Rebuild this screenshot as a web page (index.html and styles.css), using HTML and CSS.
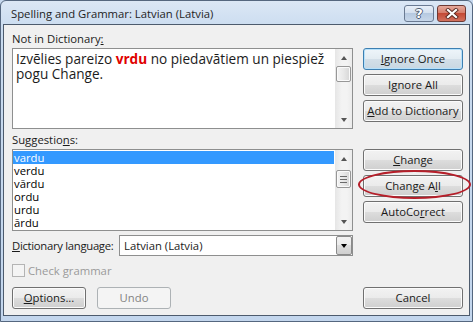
FILE: index.html
```html
<!DOCTYPE html>
<html lang="lv">
<head>
    <meta charset="UTF-8">
    <meta name="viewport" content="width=device-width, initial-scale=1.0">
    <title>Spelling and Grammar</title>
    <link rel="stylesheet" href="styles.css">
</head>
<body>
    <div class="window">
        <div class="titlebar">
            <span class="title">Spelling and Grammar: Latvian (Latvia)</span>
            <div class="caption-buttons">
                <span class="cap help">?</span>
                <span class="cap close">
                    <svg width="14" height="11" viewBox="0 0 14 11">
                        <path d="M3 2 L11 9 M11 2 L3 9" stroke="#5a2a22" stroke-width="4" stroke-linecap="square"/>
                        <path d="M3 2 L11 9 M11 2 L3 9" stroke="#ffffff" stroke-width="2.2" stroke-linecap="square"/>
                    </svg>
                </span>
            </div>
        </div>
        <div class="client">
            <div class="label">Not in Dictionary<u>:</u></div>
            <div class="section">
                <div class="textbox">
                    <div class="textbox-text">Izvēlies pareizo <span class="err">vrdu</span> no piedavātiem un piespiež pogu Change.</div>
                    <div class="scrollbar">
                        <span class="arrow up"></span>
                        <span class="thumb small"></span>
                        <span class="arrow down"></span>
                    </div>
                </div>
                <div class="btn-col">
                    <button class="btn default"><u>I</u>gnore Once</button>
                    <button class="btn">I<u>g</u>nore All</button>
                    <button class="btn"><u>A</u>dd to Dictionary</button>
                </div>
            </div>
            <div class="label">Suggestio<u>n</u>s:</div>
            <div class="section">
                <div class="listbox">
                    <ul class="items">
                        <li class="selected">vardu</li>
                        <li>verdu</li>
                        <li>vārdu</li>
                        <li>ordu</li>
                        <li>urdu</li>
                        <li>ārdu</li>
                    </ul>
                    <div class="scrollbar">
                        <span class="arrow up"></span>
                        <span class="thumb grip"><i></i><i></i><i></i></span>
                        <span class="arrow down"></span>
                    </div>
                </div>
                <div class="btn-col">
                    <button class="btn"><u>C</u>hange</button>
                    <div class="ringed">
                        <button class="btn">Change A<u>l</u>l</button>
                        <span class="ring"></span>
                    </div>
                    <button class="btn">AutoCo<u>r</u>rect</button>
                </div>
            </div>
            <div class="lang-row">
                <span class="lang-label"><u>D</u>ictionary language:</span>
                <div class="combo">
                    <span class="combo-text">Latvian (Latvia)</span>
                    <span class="combo-btn"><span class="arrow down dark"></span></span>
                </div>
            </div>
            <div class="check-row">
                <span class="checkbox"></span>
                <span class="check-text">Check grammar</span>
            </div>
            <div class="bottom-row">
                <button class="btn small-btn"><u>O</u>ptions...</button>
                <button class="btn small-btn" disabled>Undo</button>
                <button class="btn cancel">Cancel</button>
            </div>
        </div>
    </div>
</body>
</html>
```

FILE: styles.css
```css
* {
    box-sizing: border-box;
}
body {
    margin: 0;
    font-family: 'Open Sans', 'Noto Sans', sans-serif;
    font-size: 11.3px;
    color: #1a1a1a;
    background: #c6d8ee;
}
.window {
    width: 473px;
    height: 322px;
    border: 1px solid #55677f;
    border-radius: 6px 6px 0 0;
    background: linear-gradient(#dbe7f5, #c9dbef 30px, #c3d6ed);
    padding: 0 2px 5px 2px;
    display: flex;
    flex-direction: column;
}
.titlebar {
    height: 23px;
    display: flex;
    align-items: flex-start;
    justify-content: space-between;
}
.title {
    margin: 5px 0 0 8px;
    font-size: 11.3px;
    line-height: 15px;
    color: #1e1e1e;
}
.caption-buttons {
    display: flex;
    gap: 3px;
    margin: 4px 4px 0 0;
}
.cap {
    width: 30px;
    height: 17px;
    border: 1px solid #6a7a92;
    border-radius: 3px;
    display: flex;
    align-items: center;
    justify-content: center;
}
.help {
    background: linear-gradient(#e8eff8 0%, #d4e0ef 45%, #b6c9e0 50%, #c7d7ea 100%);
    color: #ffffff;
    font-family: 'DejaVu Sans', sans-serif;
    font-weight: bold;
    font-size: 13px;
    text-shadow: 1px 0 0 #4e5d72, -1px 0 0 #4e5d72, 0 1px 0 #4e5d72, 0 -1px 0 #4e5d72;
}
.close {
    width: 29px;
    border-color: #6e3a34;
    background: linear-gradient(#e5a99c 0%, #d67e6c 45%, #c44a36 50%, #d2715e 100%);
}
.client {
    flex: 1;
    background: #f0f0f0;
    border: 1px solid #4d5b6d;
    padding: 6px 6px 0 8px;
    position: relative;
}
.label {
    line-height: 15px;
    height: 15px;
}
.section {
    display: flex;
    gap: 10px;
    margin: 2px 0 2px 0;
}
.section + .label {
    margin-top: 3px;
}
.textbox, .listbox {
    width: 341px;
    background: #ffffff;
    border: 1px solid #8e8f8f;
    display: flex;
}
.textbox {
    height: 81px;
}
.listbox {
    height: 82px;
}
.textbox-text {
    flex: 1;
    padding: 2px 6px 0 3px;
    font-size: 13.6px;
    line-height: 15px;
    color: #1c1c1c;
}
.err {
    color: #e00000;
    font-weight: bold;
}
.scrollbar {
    width: 17px;
    background: linear-gradient(90deg, #e6e6e6, #f3f3f3 40%, #f3f3f3 70%, #ebebeb);
    display: flex;
    flex-direction: column;
    align-items: center;
}
.arrow {
    width: 0;
    height: 0;
    border-left: 3.5px solid transparent;
    border-right: 3.5px solid transparent;
}
.arrow.up {
    border-bottom: 4px solid #555555;
    margin-top: 7px;
}
.arrow.down {
    border-top: 4px solid #555555;
    margin-top: auto;
    margin-bottom: 6px;
}
.thumb {
    width: 15px;
    border: 1px solid #979797;
    border-radius: 2px;
    background: linear-gradient(90deg, #f4f4f4, #e8e8e8 50%, #d6d6d6);
    box-shadow: inset 0 0 0 1px #fafafa;
}
.thumb.small {
    height: 16px;
    margin-top: 6px;
}
.thumb.grip {
    height: 18px;
    margin-top: 9px;
    display: flex;
    flex-direction: column;
    align-items: center;
    justify-content: center;
    gap: 2px;
}
.thumb.grip i {
    display: block;
    width: 7px;
    height: 1px;
    background: #6b6b6b;
}
.items {
    list-style: none;
    margin: 0;
    padding: 1px 1px 0 0;
    flex: 1;
}
.items li {
    height: 13px;
    line-height: 13px;
    padding-left: 1px;
    color: #000000;
}
.items li.selected {
    background: #3399ff;
    color: #ffffff;
}
.btn-col {
    width: 100px;
    display: flex;
    flex-direction: column;
    gap: 4px;
}
.btn {
    height: 22px;
    width: 100px;
    padding: 0;
    border: 1px solid #707070;
    border-radius: 3px;
    background: linear-gradient(#f2f2f2 0%, #ebebeb 49%, #dddddd 50%, #cfcfcf 100%);
    box-shadow: inset 0 0 0 1px #fbfbfb;
    font-family: inherit;
    font-size: 11.3px;
    color: #1a1a1a;
    line-height: 18px;
}
.btn.default {
    border-color: #3c7fb1;
    box-shadow: inset 0 0 0 1px #b6e1fb;
    background: linear-gradient(#eef5fa 0%, #e3ecf2 49%, #d3dfe8 50%, #c8d7e2 100%);
}
.btn:disabled {
    border-color: #adb2b5;
    background: #f4f4f4;
    box-shadow: none;
    color: #838383;
}
.ringed {
    position: relative;
}
.ring {
    position: absolute;
    left: -5px;
    top: -5px;
    width: 113px;
    height: 29px;
    border: 2px solid #b51f2a;
    border-radius: 50%;
}
.lang-row {
    display: flex;
    align-items: center;
    margin-top: 4px;
    height: 21px;
}
.lang-label {
    width: 107px;
    flex-shrink: 0;
    white-space: nowrap;
    letter-spacing: -0.3px;
}
.combo {
    width: 234px;
    height: 21px;
    border: 1px solid #8e8f8f;
    background: #ffffff;
    display: flex;
    align-items: center;
}
.combo-text {
    flex: 1;
    padding-left: 4px;
}
.combo-btn {
    width: 16px;
    height: 19px;
    border: 1px solid #8a8a8a;
    border-radius: 2px;
    background: linear-gradient(#f2f2f2 0%, #ebebeb 49%, #dddddd 50%, #cfcfcf 100%);
    display: flex;
    align-items: center;
    justify-content: center;
}
.arrow.dark {
    border-top-color: #000000;
    margin: 0;
}
.check-row {
    display: flex;
    align-items: center;
    gap: 3px;
    margin-top: 7px;
    height: 15px;
}
.checkbox {
    width: 13px;
    height: 13px;
    border: 1px solid #b4b4b4;
    background: #f4f4f4;
}
.check-text {
    color: #9a9a9a;
}
.bottom-row {
    display: flex;
    gap: 11px;
    margin-top: 9px;
}
.small-btn {
    width: 74px;
}
.cancel {
    margin-left: auto;
}
```
